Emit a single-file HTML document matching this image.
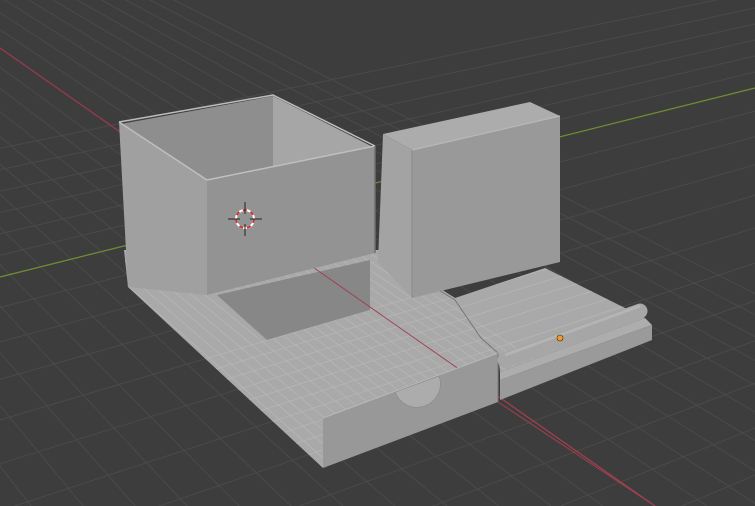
<!DOCTYPE html>
<html><head><meta charset="utf-8">
<style>
html,body{margin:0;padding:0;background:#3d3d3d;overflow:hidden;width:755px;height:506px}
svg{display:block;position:absolute;left:0;top:0}
</style></head>
<body>
<svg id="s" width="755" height="506" viewBox="0 0 755 506" xmlns="http://www.w3.org/2000/svg">
<defs>
<clipPath id="baseclip">
<polygon points="124,250 380,250 455,298 545,268 645,318 500,372 498,353 323,418 323,468 128,287"/>
</clipPath>
</defs>
<rect width="755" height="506" fill="#3d3d3d"/>
<g id="bg" stroke="#4a4a4a" stroke-width="1"></g>
<line x1="0" y1="48" x2="655" y2="506" stroke="#9a3a4a" stroke-width="1.2"/>
<line x1="0" y1="277" x2="755" y2="88" stroke="#6f8f2f" stroke-width="1.2"/>

<polygon points="124,250 380,250 455,298 545,268 645,318 500,372 498,353 323,418 323,468 128,287" fill="#a9a9a9"/>
<g id="fg" stroke="#b6b6b6" stroke-width="0.8" clip-path="url(#baseclip)"></g>
<polygon points="217,295 370,260 370,310 267,340" fill="#878787"/>
<polyline points="378,253 455,300 481,338 498,353" fill="none" stroke="#777" stroke-width="1"/>
<line x1="307" y1="263" x2="655" y2="506" stroke="#a04050" stroke-width="1"/>

<polygon points="323,418 498,353 498,402 323,468" fill="#989898"/>
<path d="M395,392 A22,22 0 0 0 439,376 Z" fill="#acacac" stroke="#8d8d8d" stroke-width="0.8"/>
<line x1="323" y1="418" x2="498" y2="353" stroke="#b8b8b8" stroke-width="1"/>
<line x1="498" y1="353" x2="498" y2="402" stroke="#7a7a7a" stroke-width="1"/>
<line x1="498" y1="402" x2="655" y2="506" stroke="#a04050" stroke-width="1"/>

<polygon points="500,372 645,318 652,325 500,380" fill="#adadad"/>
<polygon points="500,380 652,325 652,340 500,400" fill="#9a9a9a"/>
<line x1="505" y1="360" x2="640" y2="311" stroke="#a6a6a6" stroke-width="15" stroke-linecap="round"/>
<line x1="505" y1="355" x2="640" y2="306" stroke="#b4b4b4" stroke-width="3"/>
<circle cx="560" cy="338" r="3" fill="#f09a30" stroke="#4a2a00" stroke-width="0.6"/>

<polygon points="383,134 530,102 560,116 412,150" fill="#acacac"/>
<polygon points="383,134 412,150 412,298 378,262" fill="#a3a3a3"/>
<polygon points="412,150 560,116 560,262 412,298" fill="#999999"/>
<line x1="412" y1="150" x2="560" y2="116" stroke="#b8b8b8" stroke-width="1.2"/>
<line x1="412" y1="150" x2="412" y2="298" stroke="#8a8a8a" stroke-width="1"/>

<polygon points="119,122 207,180 207,295 128,287" fill="#a0a0a0"/>
<polygon points="121,124 273,96 273,167 207,180" fill="#8e8e8e"/>
<polygon points="273,96 373,147 273,167" fill="#a6a6a6"/>
<polygon points="207,180 375,146 375,253 207,295" fill="#939393"/>
<polyline points="119,122 273,95 375,146" fill="none" stroke="#bdbdbd" stroke-width="1.5"/>
<line x1="207" y1="180" x2="375" y2="146" stroke="#bfbfbf" stroke-width="1.5"/>
<line x1="119" y1="122" x2="207" y2="180" stroke="#bfbfbf" stroke-width="1.5"/>
<line x1="375" y1="146" x2="375" y2="253" stroke="#6f6f6f" stroke-width="1.5"/>

<g transform="translate(245,219)">
<circle r="9" fill="none" stroke="#fff" stroke-width="2"/>
<circle r="9" fill="none" stroke="#d03030" stroke-width="2" stroke-dasharray="4,4"/>
<line x1="-17" y1="0" x2="-5" y2="0" stroke="#222" stroke-width="1"/>
<line x1="5" y1="0" x2="17" y2="0" stroke="#222" stroke-width="1"/>
<line x1="0" y1="-17" x2="0" y2="-5" stroke="#222" stroke-width="1"/>
<line x1="0" y1="5" x2="0" y2="17" stroke="#222" stroke-width="1"/>
</g>
</svg>
<script>
(function(){
var NS="http://www.w3.org/2000/svg";
function L(g,x1,y1,x2,y2){var l=document.createElementNS(NS,"line");l.setAttribute("x1",x1);l.setAttribute("y1",y1);l.setAttribute("x2",x2);l.setAttribute("y2",y2);g.appendChild(l);}
var VA=[-700,-442], VB=[3000,-473];
function famA(g,step,n0,n1){for(var i=0;n0+i*step<=n1+1e-6;i++){var k=n0+i*step;var x=655+k*52,y=506;L(g,VA[0],VA[1],x+(x-VA[0])*0.5,y+(y-VA[1])*0.5);}}
function famB(g,step,n0,n1){for(var i=0;n0+i*step<=n1+1e-6;i++){var k=n0+i*step;var y=k>=0?88+22*k+1.2*k*k:88+16*k;var x=755;L(g,VB[0],VB[1],x-(VB[0]-x)*1.2,y-(VB[1]-y)*1.2);}}
var bg=document.getElementById("bg");famA(bg,1,-30,10);famB(bg,1,-6,20);
var fg=document.getElementById("fg");famA(fg,1/3,-12,2);famB(fg,1/3,4,16);
})();
</script>
</body></html>
